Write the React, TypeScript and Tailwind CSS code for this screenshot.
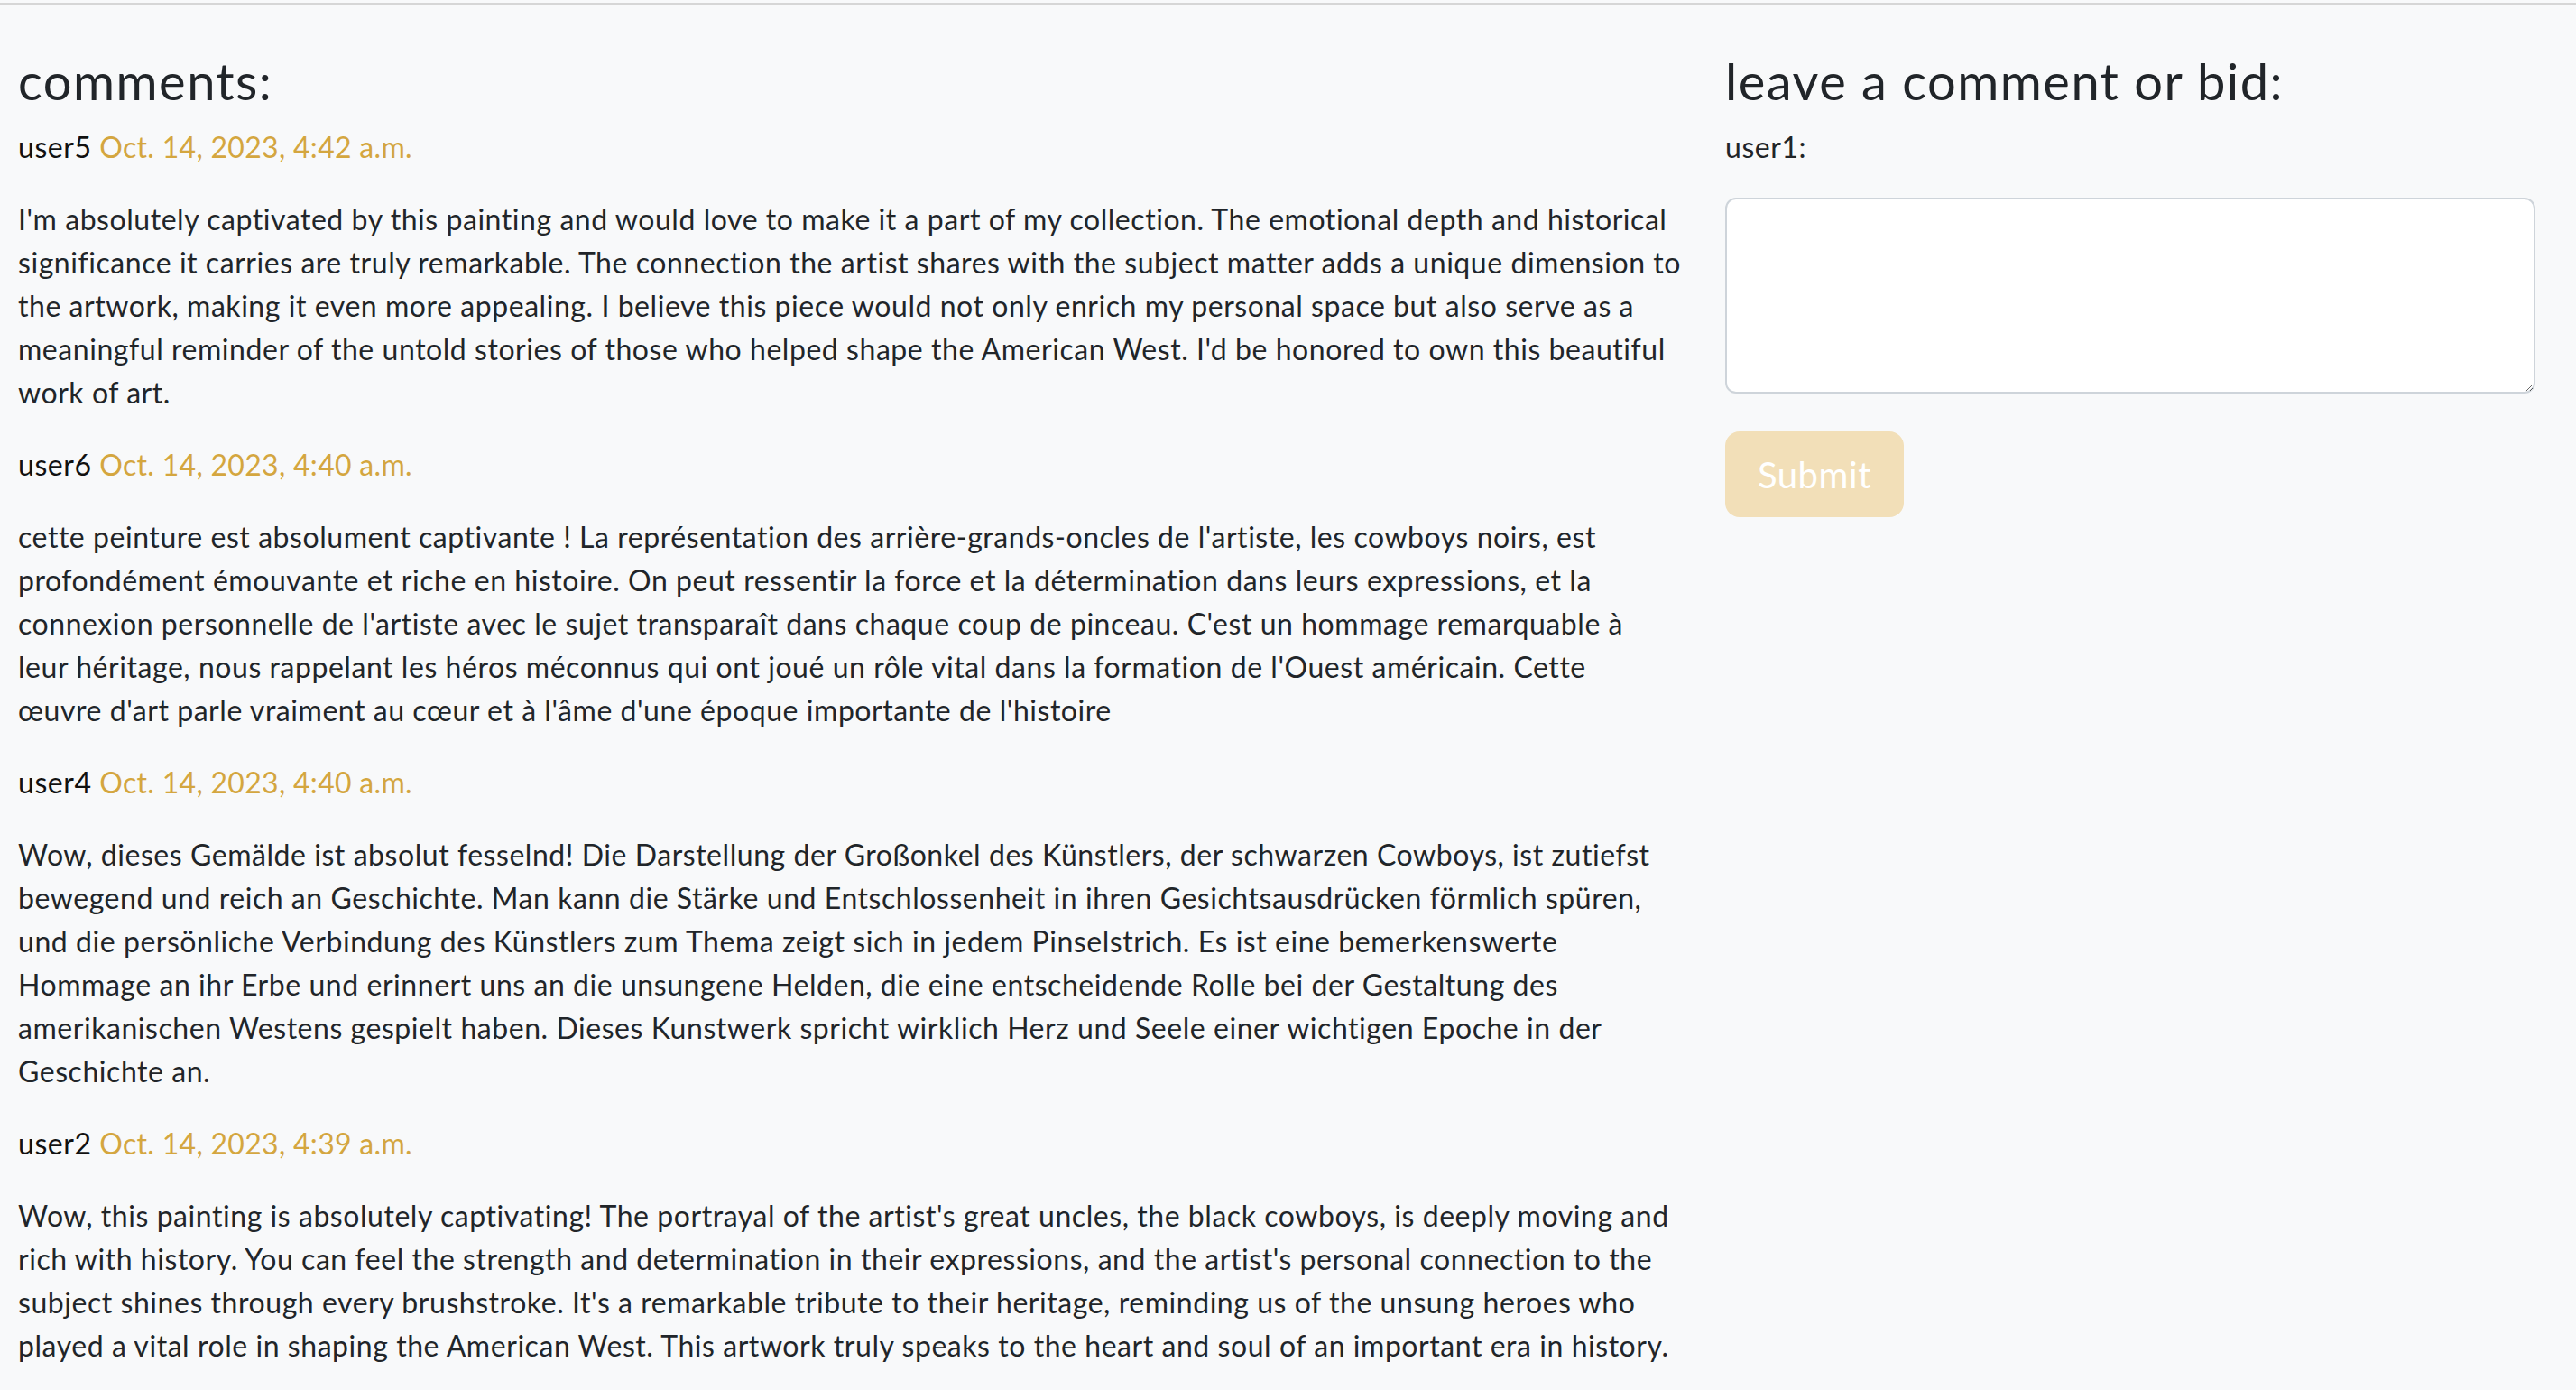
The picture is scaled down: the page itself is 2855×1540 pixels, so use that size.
type Comment = {
  user: string;
  date: string;
  lines: string[];
};

// line breaks follow the wrap of the original page
const comments: Comment[] = [
  {
    user: "user5",
    date: "Oct. 14, 2023, 4:42 a.m.",
    lines: [
      "I'm absolutely captivated by this painting and would love to make it a part of my collection. The emotional depth and historical",
      "significance it carries are truly remarkable. The connection the artist shares with the subject matter adds a unique dimension to",
      "the artwork, making it even more appealing. I believe this piece would not only enrich my personal space but also serve as a",
      "meaningful reminder of the untold stories of those who helped shape the American West. I'd be honored to own this beautiful",
      "work of art.",
    ],
  },
  {
    user: "user6",
    date: "Oct. 14, 2023, 4:40 a.m.",
    lines: [
      "cette peinture est absolument captivante ! La représentation des arrière-grands-oncles de l'artiste, les cowboys noirs, est",
      "profondément émouvante et riche en histoire. On peut ressentir la force et la détermination dans leurs expressions, et la",
      "connexion personnelle de l'artiste avec le sujet transparaît dans chaque coup de pinceau. C'est un hommage remarquable à",
      "leur héritage, nous rappelant les héros méconnus qui ont joué un rôle vital dans la formation de l'Ouest américain. Cette",
      "œuvre d'art parle vraiment au cœur et à l'âme d'une époque importante de l'histoire",
    ],
  },
  {
    user: "user4",
    date: "Oct. 14, 2023, 4:40 a.m.",
    lines: [
      "Wow, dieses Gemälde ist absolut fesselnd! Die Darstellung der Großonkel des Künstlers, der schwarzen Cowboys, ist zutiefst",
      "bewegend und reich an Geschichte. Man kann die Stärke und Entschlossenheit in ihren Gesichtsausdrücken förmlich spüren,",
      "und die persönliche Verbindung des Künstlers zum Thema zeigt sich in jedem Pinselstrich. Es ist eine bemerkenswerte",
      "Hommage an ihr Erbe und erinnert uns an die unsungene Helden, die eine entscheidende Rolle bei der Gestaltung des",
      "amerikanischen Westens gespielt haben. Dieses Kunstwerk spricht wirklich Herz und Seele einer wichtigen Epoche in der",
      "Geschichte an.",
    ],
  },
  {
    user: "user2",
    date: "Oct. 14, 2023, 4:39 a.m.",
    lines: [
      "Wow, this painting is absolutely captivating! The portrayal of the artist's great uncles, the black cowboys, is deeply moving and",
      "rich with history. You can feel the strength and determination in their expressions, and the artist's personal connection to the",
      "subject shines through every brushstroke. It's a remarkable tribute to their heritage, reminding us of the unsung heroes who",
      "played a vital role in shaping the American West. This artwork truly speaks to the heart and soul of an important era in history.",
    ],
  },
];

export default function App() {
  return (
    <div className="min-h-screen bg-[#f8f9fa] pt-[3px] font-['Lato',sans-serif] text-[#212529] tracking-[0.55px]">
      <div className="border-t-2 border-[#d6d6d6] flex gap-[32px] pl-[20px] pt-[51px]">
        <div className="w-[1860px] shrink-0">
          <h3 className="text-[56px] leading-[67px] mb-[16px] font-normal tracking-[1.5px]">comments:</h3>
          {comments.map((c) => (
            <div key={c.user}>
              <p className="text-[32px] leading-[48px] mb-[32px]">
                <span className="text-[#111]">{c.user}</span>{" "}
                <span className="text-[#d4a63f] tracking-[0.3px]">{c.date}</span>
              </p>
              <p className="text-[32px] leading-[48px] mb-[32px]">
                {c.lines.map((l, i) => (
                  <span key={i} className="block whitespace-nowrap">
                    {l}
                  </span>
                ))}
              </p>
            </div>
          ))}
        </div>
        <div className="w-[898px] shrink-0">
          <h3 className="text-[56px] leading-[67px] mb-[16px] font-normal tracking-[1.5px]">leave a comment or bid:</h3>
          <p className="text-[32px] leading-[48px] mb-[32px]">user1:</p>
          <textarea className="block w-full h-[217px] bg-white border-2 border-[#ced4da] rounded-[12px] resize-y outline-none" />
          <button
            type="button"
            disabled
            className="mt-[42px] w-[198px] h-[95px] bg-[#f2dfb8] rounded-[16px] text-white text-[40px] leading-[60px]"
          >
            Submit
          </button>
        </div>
      </div>
    </div>
  );
}
